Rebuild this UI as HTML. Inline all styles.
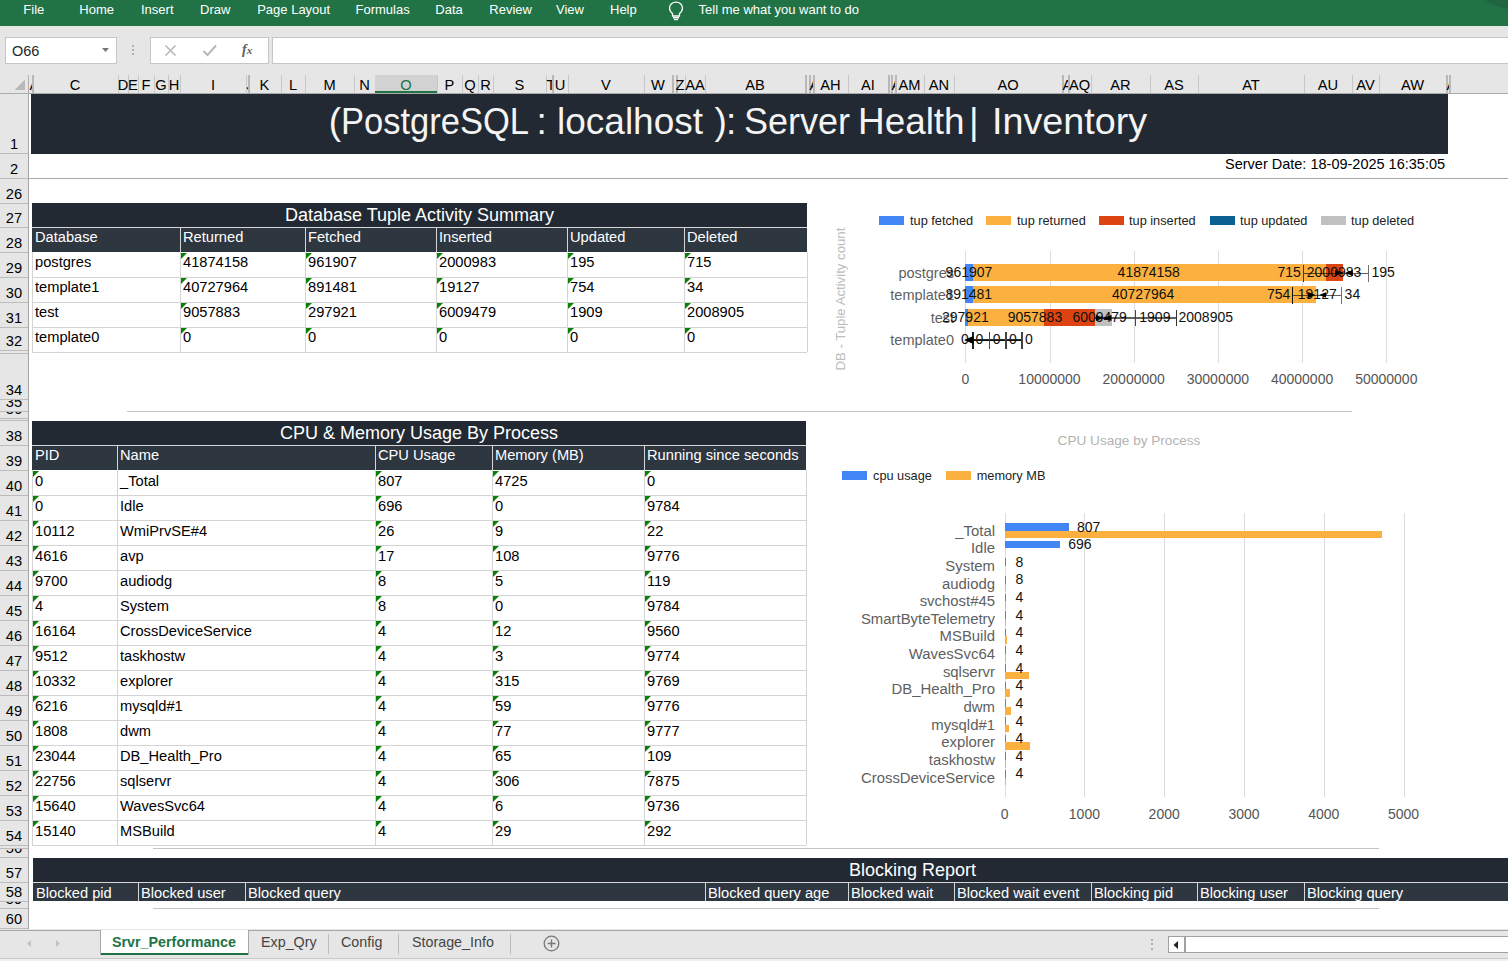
<!DOCTYPE html><html><head><meta charset="utf-8"><style>
*{margin:0;padding:0;box-sizing:border-box}
html,body{width:1508px;height:961px;overflow:hidden;background:#fff}
#r{position:relative;width:1508px;height:961px;overflow:hidden;font-family:"Liberation Sans",sans-serif}
#r div{position:absolute}
.t{white-space:nowrap;line-height:1}
</style></head><body><div id="r"><div style="left:0px;top:0px;width:1508px;height:26px;background:#217346"></div>
<div style="left:1480px;top:-30px;width:80px;height:40px;border-radius:50%;background:#1f6640"></div>
<div class="t" style="left:23.3px;top:3px;color:#fff;font-size:13px">File</div>
<div class="t" style="left:79.3px;top:3px;color:#fff;font-size:13px">Home</div>
<div class="t" style="left:141px;top:3px;color:#fff;font-size:13px">Insert</div>
<div class="t" style="left:200px;top:3px;color:#fff;font-size:13px">Draw</div>
<div class="t" style="left:257.2px;top:3px;color:#fff;font-size:13px">Page Layout</div>
<div class="t" style="left:355.5px;top:3px;color:#fff;font-size:13px">Formulas</div>
<div class="t" style="left:435.3px;top:3px;color:#fff;font-size:13px">Data</div>
<div class="t" style="left:489.3px;top:3px;color:#fff;font-size:13px">Review</div>
<div class="t" style="left:556px;top:3px;color:#fff;font-size:13px">View</div>
<div class="t" style="left:610px;top:3px;color:#fff;font-size:13px">Help</div>
<div class="t" style="left:698.6px;top:3px;color:#fff;font-size:13px">Tell me what you want to do</div>
<svg style="position:absolute;left:667px;top:1px" width="18" height="20" viewBox="0 0 18 20"><path d="M5.5 12.5 C3.5 11 2.5 9 2.5 7 C2.5 3.5 5.5 1.2 9 1.2 C12.5 1.2 15.5 3.5 15.5 7 C15.5 9 14.5 11 12.5 12.5 L12.5 15 L5.5 15 Z" fill="none" stroke="#fff" stroke-width="1.3"/><rect x="6" y="16" width="6" height="1.5" fill="#fff"/><rect x="7" y="18" width="4" height="1.2" fill="#fff"/></svg>
<div style="left:0px;top:26px;width:1508px;height:49px;background:#e6e6e6"></div>
<div style="left:5px;top:37px;width:112px;height:27px;background:#fff;border:1px solid #c6c6c6"></div>
<div class="t" style="left:12px;top:44px;color:#262626;font-size:14.5px">O66</div>
<svg style="position:absolute;left:102px;top:48px" width="8" height="5"><path d="M0 0 L7 0 L3.5 4 Z" fill="#777"/></svg>
<div style="left:132px;top:45px;width:2px;height:2px;background:#b0b0b0"></div>
<div style="left:132px;top:49px;width:2px;height:2px;background:#b0b0b0"></div>
<div style="left:132px;top:53px;width:2px;height:2px;background:#b0b0b0"></div>
<div style="left:150px;top:37px;width:119px;height:27px;background:#fff;border:1px solid #c6c6c6"></div>
<svg style="position:absolute;left:164px;top:44px" width="14" height="13"><path d="M1.5 1.5 L11.5 11.5 M11.5 1.5 L1.5 11.5" stroke="#b8b8b8" stroke-width="1.6"/></svg>
<svg style="position:absolute;left:202px;top:44px" width="16" height="13"><path d="M1.5 7 L5.5 11 L14 1.5" fill="none" stroke="#b8b8b8" stroke-width="2"/></svg>
<div class="t" style="left:242px;top:43px;color:#606060;font-size:14px;font-family:&quot;Liberation Serif&quot;,serif;font-style:italic;font-weight:bold">f<span style="font-size:11px">x</span></div>
<div style="left:272px;top:37px;width:1240px;height:27px;background:#fff;border:1px solid #c6c6c6"></div>
<div style="left:0px;top:75px;width:1508px;height:19px;background:#e6e6e6"></div>
<div style="left:0px;top:93px;width:1508px;height:1px;background:#ababab"></div>
<svg style="position:absolute;left:14px;top:79px" width="12" height="12"><path d="M11 0.5 L11 11 L0.5 11 Z" fill="#b9b9b9"/></svg>
<div style="left:29px;top:75px;width:3px;height:18px;overflow:hidden;"><div class="t" style="left:0;width:8px;top:2.5px;text-align:center;font-size:14.67px;color:#000;left:0.5px;width:20px;text-align:left;">A</div></div>
<div style="left:31.5px;top:75px;width:2px;height:18px;background:#b8b8b8"></div>
<div style="left:32px;top:75px;width:86px;height:18px;overflow:hidden;"><div class="t" style="left:0;width:86px;top:2.5px;text-align:center;font-size:14.67px;color:#000;">C</div></div>
<div style="left:118px;top:75px;width:1px;height:18px;background:#c8c8c8"></div>
<div style="left:118px;top:75px;width:10px;height:18px;overflow:hidden;"><div class="t" style="left:0;width:10px;top:2.5px;text-align:center;font-size:14.67px;color:#000;left:-5px;width:20px;">D</div></div>
<div style="left:128px;top:75px;width:1px;height:18px;background:#c8c8c8"></div>
<div style="left:128px;top:75px;width:10px;height:18px;overflow:hidden;"><div class="t" style="left:0;width:10px;top:2.5px;text-align:center;font-size:14.67px;color:#000;left:-5px;width:20px;">E</div></div>
<div style="left:138px;top:75px;width:1px;height:18px;background:#c8c8c8"></div>
<div style="left:138px;top:75px;width:16px;height:18px;overflow:hidden;"><div class="t" style="left:0;width:16px;top:2.5px;text-align:center;font-size:14.67px;color:#000;">F</div></div>
<div style="left:154px;top:75px;width:1px;height:18px;background:#c8c8c8"></div>
<div style="left:154px;top:75px;width:14px;height:18px;overflow:hidden;"><div class="t" style="left:0;width:14px;top:2.5px;text-align:center;font-size:14.67px;color:#000;">G</div></div>
<div style="left:168px;top:75px;width:1px;height:18px;background:#c8c8c8"></div>
<div style="left:168px;top:75px;width:12px;height:18px;overflow:hidden;"><div class="t" style="left:0;width:12px;top:2.5px;text-align:center;font-size:14.67px;color:#000;">H</div></div>
<div style="left:180px;top:75px;width:1px;height:18px;background:#c8c8c8"></div>
<div style="left:180px;top:75px;width:66px;height:18px;overflow:hidden;"><div class="t" style="left:0;width:66px;top:2.5px;text-align:center;font-size:14.67px;color:#000;">I</div></div>
<div style="left:246px;top:75px;width:1px;height:18px;background:#c8c8c8"></div>
<div style="left:246px;top:75px;width:2px;height:18px;overflow:hidden;"><div class="t" style="left:0;width:8px;top:2.5px;text-align:center;font-size:14.67px;color:#000;left:0.5px;width:20px;text-align:left;">J</div></div>
<div style="left:247.5px;top:75px;width:2px;height:18px;background:#b8b8b8"></div>
<div style="left:248px;top:75px;width:33px;height:18px;overflow:hidden;"><div class="t" style="left:0;width:33px;top:2.5px;text-align:center;font-size:14.67px;color:#000;">K</div></div>
<div style="left:281px;top:75px;width:1px;height:18px;background:#c8c8c8"></div>
<div style="left:281px;top:75px;width:24px;height:18px;overflow:hidden;"><div class="t" style="left:0;width:24px;top:2.5px;text-align:center;font-size:14.67px;color:#000;">L</div></div>
<div style="left:305px;top:75px;width:1px;height:18px;background:#c8c8c8"></div>
<div style="left:305px;top:75px;width:49px;height:18px;overflow:hidden;"><div class="t" style="left:0;width:49px;top:2.5px;text-align:center;font-size:14.67px;color:#000;">M</div></div>
<div style="left:354px;top:75px;width:1px;height:18px;background:#c8c8c8"></div>
<div style="left:354px;top:75px;width:21px;height:18px;overflow:hidden;"><div class="t" style="left:0;width:21px;top:2.5px;text-align:center;font-size:14.67px;color:#000;">N</div></div>
<div style="left:375px;top:75px;width:1px;height:18px;background:#c8c8c8"></div>
<div style="left:375px;top:75px;width:62px;height:18px;overflow:hidden;background:#d2d2d2;"><div class="t" style="left:0;width:62px;top:2.5px;text-align:center;font-size:14.67px;color:#217346;">O</div></div>
<div style="left:437px;top:75px;width:1px;height:18px;background:#c8c8c8"></div>
<div style="left:437px;top:75px;width:25px;height:18px;overflow:hidden;"><div class="t" style="left:0;width:25px;top:2.5px;text-align:center;font-size:14.67px;color:#000;">P</div></div>
<div style="left:462px;top:75px;width:1px;height:18px;background:#c8c8c8"></div>
<div style="left:462px;top:75px;width:16px;height:18px;overflow:hidden;"><div class="t" style="left:0;width:16px;top:2.5px;text-align:center;font-size:14.67px;color:#000;">Q</div></div>
<div style="left:478px;top:75px;width:1px;height:18px;background:#c8c8c8"></div>
<div style="left:478px;top:75px;width:15px;height:18px;overflow:hidden;"><div class="t" style="left:0;width:15px;top:2.5px;text-align:center;font-size:14.67px;color:#000;">R</div></div>
<div style="left:493px;top:75px;width:1px;height:18px;background:#c8c8c8"></div>
<div style="left:493px;top:75px;width:53px;height:18px;overflow:hidden;"><div class="t" style="left:0;width:53px;top:2.5px;text-align:center;font-size:14.67px;color:#000;">S</div></div>
<div style="left:546px;top:75px;width:1px;height:18px;background:#c8c8c8"></div>
<div style="left:546px;top:75px;width:6px;height:18px;overflow:hidden;"><div class="t" style="left:0;width:8px;top:2.5px;text-align:center;font-size:14.67px;color:#000;left:0.5px;width:20px;text-align:left;">T</div></div>
<div style="left:551.5px;top:75px;width:2px;height:18px;background:#b8b8b8"></div>
<div style="left:552px;top:75px;width:16px;height:18px;overflow:hidden;"><div class="t" style="left:0;width:16px;top:2.5px;text-align:center;font-size:14.67px;color:#000;">U</div></div>
<div style="left:568px;top:75px;width:1px;height:18px;background:#c8c8c8"></div>
<div style="left:568px;top:75px;width:76px;height:18px;overflow:hidden;"><div class="t" style="left:0;width:76px;top:2.5px;text-align:center;font-size:14.67px;color:#000;">V</div></div>
<div style="left:644px;top:75px;width:1px;height:18px;background:#c8c8c8"></div>
<div style="left:644px;top:75px;width:28px;height:18px;overflow:hidden;"><div class="t" style="left:0;width:28px;top:2.5px;text-align:center;font-size:14.67px;color:#000;">W</div></div>
<div style="left:671.5px;top:75px;width:2px;height:18px;background:#b8b8b8"></div>
<div style="left:672px;top:75px;width:4px;height:18px;overflow:hidden;"><div class="t" style="left:0;width:8px;top:2.5px;text-align:center;font-size:14.67px;color:#000;left:0.5px;width:20px;text-align:left;"></div></div>
<div style="left:675.5px;top:75px;width:2px;height:18px;background:#b8b8b8"></div>
<div style="left:676px;top:75px;width:9px;height:18px;overflow:hidden;"><div class="t" style="left:0;width:9px;top:2.5px;text-align:center;font-size:14.67px;color:#000;left:-6px;width:20px;">Z</div></div>
<div style="left:685px;top:75px;width:1px;height:18px;background:#c8c8c8"></div>
<div style="left:685px;top:75px;width:20px;height:18px;overflow:hidden;"><div class="t" style="left:0;width:20px;top:2.5px;text-align:center;font-size:14.67px;color:#000;">AA</div></div>
<div style="left:705px;top:75px;width:1px;height:18px;background:#c8c8c8"></div>
<div style="left:705px;top:75px;width:100px;height:18px;overflow:hidden;"><div class="t" style="left:0;width:100px;top:2.5px;text-align:center;font-size:14.67px;color:#000;">AB</div></div>
<div style="left:804.5px;top:75px;width:2px;height:18px;background:#b8b8b8"></div>
<div style="left:805px;top:75px;width:4px;height:18px;overflow:hidden;"><div class="t" style="left:0;width:8px;top:2.5px;text-align:center;font-size:14.67px;color:#000;left:0.5px;width:20px;text-align:left;"></div></div>
<div style="left:808.5px;top:75px;width:2px;height:18px;background:#b8b8b8"></div>
<div style="left:809px;top:75px;width:4px;height:18px;overflow:hidden;"><div class="t" style="left:0;width:8px;top:2.5px;text-align:center;font-size:14.67px;color:#000;left:0.5px;width:20px;text-align:left;">AG</div></div>
<div style="left:812.5px;top:75px;width:2px;height:18px;background:#b8b8b8"></div>
<div style="left:813px;top:75px;width:35px;height:18px;overflow:hidden;"><div class="t" style="left:0;width:35px;top:2.5px;text-align:center;font-size:14.67px;color:#000;">AH</div></div>
<div style="left:848px;top:75px;width:1px;height:18px;background:#c8c8c8"></div>
<div style="left:848px;top:75px;width:40px;height:18px;overflow:hidden;"><div class="t" style="left:0;width:40px;top:2.5px;text-align:center;font-size:14.67px;color:#000;">AI</div></div>
<div style="left:887.5px;top:75px;width:2px;height:18px;background:#b8b8b8"></div>
<div style="left:888px;top:75px;width:3px;height:18px;overflow:hidden;"><div class="t" style="left:0;width:8px;top:2.5px;text-align:center;font-size:14.67px;color:#000;left:0.5px;width:20px;text-align:left;"></div></div>
<div style="left:890.5px;top:75px;width:2px;height:18px;background:#b8b8b8"></div>
<div style="left:891px;top:75px;width:4px;height:18px;overflow:hidden;"><div class="t" style="left:0;width:8px;top:2.5px;text-align:center;font-size:14.67px;color:#000;left:0.5px;width:20px;text-align:left;">AL</div></div>
<div style="left:894.5px;top:75px;width:2px;height:18px;background:#b8b8b8"></div>
<div style="left:895px;top:75px;width:29px;height:18px;overflow:hidden;"><div class="t" style="left:0;width:29px;top:2.5px;text-align:center;font-size:14.67px;color:#000;">AM</div></div>
<div style="left:924px;top:75px;width:1px;height:18px;background:#c8c8c8"></div>
<div style="left:924px;top:75px;width:30px;height:18px;overflow:hidden;"><div class="t" style="left:0;width:30px;top:2.5px;text-align:center;font-size:14.67px;color:#000;">AN</div></div>
<div style="left:954px;top:75px;width:1px;height:18px;background:#c8c8c8"></div>
<div style="left:954px;top:75px;width:108px;height:18px;overflow:hidden;"><div class="t" style="left:0;width:108px;top:2.5px;text-align:center;font-size:14.67px;color:#000;">AO</div></div>
<div style="left:1061.5px;top:75px;width:2px;height:18px;background:#b8b8b8"></div>
<div style="left:1062px;top:75px;width:6px;height:18px;overflow:hidden;"><div class="t" style="left:0;width:8px;top:2.5px;text-align:center;font-size:14.67px;color:#000;left:0.5px;width:20px;text-align:left;">AP</div></div>
<div style="left:1067.5px;top:75px;width:2px;height:18px;background:#b8b8b8"></div>
<div style="left:1068px;top:75px;width:23px;height:18px;overflow:hidden;"><div class="t" style="left:0;width:23px;top:2.5px;text-align:center;font-size:14.67px;color:#000;">AQ</div></div>
<div style="left:1091px;top:75px;width:1px;height:18px;background:#c8c8c8"></div>
<div style="left:1091px;top:75px;width:59px;height:18px;overflow:hidden;"><div class="t" style="left:0;width:59px;top:2.5px;text-align:center;font-size:14.67px;color:#000;">AR</div></div>
<div style="left:1150px;top:75px;width:1px;height:18px;background:#c8c8c8"></div>
<div style="left:1150px;top:75px;width:48px;height:18px;overflow:hidden;"><div class="t" style="left:0;width:48px;top:2.5px;text-align:center;font-size:14.67px;color:#000;">AS</div></div>
<div style="left:1198px;top:75px;width:1px;height:18px;background:#c8c8c8"></div>
<div style="left:1198px;top:75px;width:106px;height:18px;overflow:hidden;"><div class="t" style="left:0;width:106px;top:2.5px;text-align:center;font-size:14.67px;color:#000;">AT</div></div>
<div style="left:1304px;top:75px;width:1px;height:18px;background:#c8c8c8"></div>
<div style="left:1304px;top:75px;width:48px;height:18px;overflow:hidden;"><div class="t" style="left:0;width:48px;top:2.5px;text-align:center;font-size:14.67px;color:#000;">AU</div></div>
<div style="left:1352px;top:75px;width:1px;height:18px;background:#c8c8c8"></div>
<div style="left:1352px;top:75px;width:27px;height:18px;overflow:hidden;"><div class="t" style="left:0;width:27px;top:2.5px;text-align:center;font-size:14.67px;color:#000;">AV</div></div>
<div style="left:1379px;top:75px;width:1px;height:18px;background:#c8c8c8"></div>
<div style="left:1379px;top:75px;width:67px;height:18px;overflow:hidden;"><div class="t" style="left:0;width:67px;top:2.5px;text-align:center;font-size:14.67px;color:#000;">AW</div></div>
<div style="left:1445.5px;top:75px;width:2px;height:18px;background:#b8b8b8"></div>
<div style="left:1446px;top:75px;width:3px;height:18px;overflow:hidden;"><div class="t" style="left:0;width:8px;top:2.5px;text-align:center;font-size:14.67px;color:#000;left:0.5px;width:20px;text-align:left;">AX</div></div>
<div style="left:1448.5px;top:75px;width:2px;height:18px;background:#b8b8b8"></div>
<div style="left:375px;top:91px;width:62px;height:2px;background:#217346"></div>
<div style="left:28px;top:75px;width:1px;height:18px;background:#b0b0b0"></div>
<div style="left:0px;top:94px;width:28px;height:836px;background:#e6e6e6"></div>
<div style="left:28px;top:94px;width:1px;height:836px;background:#a6a6a6"></div>
<div style="left:0;top:94px;width:28px;height:59px;overflow:hidden"><div class="t" style="left:0;width:28px;bottom:1.5px;text-align:center;font-size:14.67px;color:#000">1</div></div>
<div style="left:0px;top:153px;width:28px;height:1px;background:#bcbcbc"></div>
<div style="left:0;top:154px;width:28px;height:24px;overflow:hidden"><div class="t" style="left:0;width:28px;bottom:1.5px;text-align:center;font-size:14.67px;color:#000">2</div></div>
<div style="left:0px;top:178px;width:28px;height:1px;background:#bcbcbc"></div>
<div style="left:0;top:179px;width:28px;height:24px;overflow:hidden"><div class="t" style="left:0;width:28px;bottom:1.5px;text-align:center;font-size:14.67px;color:#000">26</div></div>
<div style="left:0px;top:203px;width:28px;height:1px;background:#bcbcbc"></div>
<div style="left:0;top:204px;width:28px;height:23px;overflow:hidden"><div class="t" style="left:0;width:28px;bottom:1.5px;text-align:center;font-size:14.67px;color:#000">27</div></div>
<div style="left:0px;top:227px;width:28px;height:1px;background:#bcbcbc"></div>
<div style="left:0;top:228px;width:28px;height:24px;overflow:hidden"><div class="t" style="left:0;width:28px;bottom:1.5px;text-align:center;font-size:14.67px;color:#000">28</div></div>
<div style="left:0px;top:252px;width:28px;height:1px;background:#bcbcbc"></div>
<div style="left:0;top:253px;width:28px;height:24px;overflow:hidden"><div class="t" style="left:0;width:28px;bottom:1.5px;text-align:center;font-size:14.67px;color:#000">29</div></div>
<div style="left:0px;top:277px;width:28px;height:1px;background:#bcbcbc"></div>
<div style="left:0;top:278px;width:28px;height:24px;overflow:hidden"><div class="t" style="left:0;width:28px;bottom:1.5px;text-align:center;font-size:14.67px;color:#000">30</div></div>
<div style="left:0px;top:302px;width:28px;height:1px;background:#bcbcbc"></div>
<div style="left:0;top:303px;width:28px;height:24px;overflow:hidden"><div class="t" style="left:0;width:28px;bottom:1.5px;text-align:center;font-size:14.67px;color:#000">31</div></div>
<div style="left:0px;top:327px;width:28px;height:1px;background:#bcbcbc"></div>
<div style="left:0;top:328px;width:28px;height:22px;overflow:hidden"><div class="t" style="left:0;width:28px;bottom:1.5px;text-align:center;font-size:14.67px;color:#000">32</div></div>
<div style="left:0px;top:350px;width:28px;height:1px;background:#bcbcbc"></div>
<div style="left:0;top:351px;width:28px;height:2px;overflow:hidden"><div class="t" style="left:0;width:28px;bottom:1.5px;text-align:center;font-size:14.67px;color:#000">33</div></div>
<div style="left:0px;top:353px;width:28px;height:1px;background:#bcbcbc"></div>
<div style="left:0;top:354px;width:28px;height:45px;overflow:hidden"><div class="t" style="left:0;width:28px;bottom:1.5px;text-align:center;font-size:14.67px;color:#000">34</div></div>
<div style="left:0px;top:399px;width:28px;height:1px;background:#bcbcbc"></div>
<div style="left:0;top:400px;width:28px;height:11px;overflow:hidden"><div class="t" style="left:0;width:28px;bottom:1.5px;text-align:center;font-size:14.67px;color:#000">35</div></div>
<div style="left:0px;top:411px;width:28px;height:1px;background:#bcbcbc"></div>
<div style="left:0;top:412px;width:28px;height:6px;overflow:hidden"><div class="t" style="left:0;width:28px;bottom:1.5px;text-align:center;font-size:14.67px;color:#000">36</div></div>
<div style="left:0px;top:418px;width:28px;height:1px;background:#bcbcbc"></div>
<div style="left:0;top:419px;width:28px;height:1px;overflow:hidden"><div class="t" style="left:0;width:28px;bottom:1.5px;text-align:center;font-size:14.67px;color:#000">37</div></div>
<div style="left:0px;top:420px;width:28px;height:1px;background:#bcbcbc"></div>
<div style="left:0;top:421px;width:28px;height:24px;overflow:hidden"><div class="t" style="left:0;width:28px;bottom:1.5px;text-align:center;font-size:14.67px;color:#000">38</div></div>
<div style="left:0px;top:445px;width:28px;height:1px;background:#bcbcbc"></div>
<div style="left:0;top:446px;width:28px;height:24px;overflow:hidden"><div class="t" style="left:0;width:28px;bottom:1.5px;text-align:center;font-size:14.67px;color:#000">39</div></div>
<div style="left:0px;top:470px;width:28px;height:1px;background:#bcbcbc"></div>
<div style="left:0;top:471px;width:28px;height:24px;overflow:hidden"><div class="t" style="left:0;width:28px;bottom:1.5px;text-align:center;font-size:14.67px;color:#000">40</div></div>
<div style="left:0px;top:495px;width:28px;height:1px;background:#bcbcbc"></div>
<div style="left:0;top:496px;width:28px;height:24px;overflow:hidden"><div class="t" style="left:0;width:28px;bottom:1.5px;text-align:center;font-size:14.67px;color:#000">41</div></div>
<div style="left:0px;top:520px;width:28px;height:1px;background:#bcbcbc"></div>
<div style="left:0;top:521px;width:28px;height:24px;overflow:hidden"><div class="t" style="left:0;width:28px;bottom:1.5px;text-align:center;font-size:14.67px;color:#000">42</div></div>
<div style="left:0px;top:545px;width:28px;height:1px;background:#bcbcbc"></div>
<div style="left:0;top:546px;width:28px;height:24px;overflow:hidden"><div class="t" style="left:0;width:28px;bottom:1.5px;text-align:center;font-size:14.67px;color:#000">43</div></div>
<div style="left:0px;top:570px;width:28px;height:1px;background:#bcbcbc"></div>
<div style="left:0;top:571px;width:28px;height:24px;overflow:hidden"><div class="t" style="left:0;width:28px;bottom:1.5px;text-align:center;font-size:14.67px;color:#000">44</div></div>
<div style="left:0px;top:595px;width:28px;height:1px;background:#bcbcbc"></div>
<div style="left:0;top:596px;width:28px;height:24px;overflow:hidden"><div class="t" style="left:0;width:28px;bottom:1.5px;text-align:center;font-size:14.67px;color:#000">45</div></div>
<div style="left:0px;top:620px;width:28px;height:1px;background:#bcbcbc"></div>
<div style="left:0;top:621px;width:28px;height:24px;overflow:hidden"><div class="t" style="left:0;width:28px;bottom:1.5px;text-align:center;font-size:14.67px;color:#000">46</div></div>
<div style="left:0px;top:645px;width:28px;height:1px;background:#bcbcbc"></div>
<div style="left:0;top:646px;width:28px;height:24px;overflow:hidden"><div class="t" style="left:0;width:28px;bottom:1.5px;text-align:center;font-size:14.67px;color:#000">47</div></div>
<div style="left:0px;top:670px;width:28px;height:1px;background:#bcbcbc"></div>
<div style="left:0;top:671px;width:28px;height:24px;overflow:hidden"><div class="t" style="left:0;width:28px;bottom:1.5px;text-align:center;font-size:14.67px;color:#000">48</div></div>
<div style="left:0px;top:695px;width:28px;height:1px;background:#bcbcbc"></div>
<div style="left:0;top:696px;width:28px;height:24px;overflow:hidden"><div class="t" style="left:0;width:28px;bottom:1.5px;text-align:center;font-size:14.67px;color:#000">49</div></div>
<div style="left:0px;top:720px;width:28px;height:1px;background:#bcbcbc"></div>
<div style="left:0;top:721px;width:28px;height:24px;overflow:hidden"><div class="t" style="left:0;width:28px;bottom:1.5px;text-align:center;font-size:14.67px;color:#000">50</div></div>
<div style="left:0px;top:745px;width:28px;height:1px;background:#bcbcbc"></div>
<div style="left:0;top:746px;width:28px;height:24px;overflow:hidden"><div class="t" style="left:0;width:28px;bottom:1.5px;text-align:center;font-size:14.67px;color:#000">51</div></div>
<div style="left:0px;top:770px;width:28px;height:1px;background:#bcbcbc"></div>
<div style="left:0;top:771px;width:28px;height:24px;overflow:hidden"><div class="t" style="left:0;width:28px;bottom:1.5px;text-align:center;font-size:14.67px;color:#000">52</div></div>
<div style="left:0px;top:795px;width:28px;height:1px;background:#bcbcbc"></div>
<div style="left:0;top:796px;width:28px;height:24px;overflow:hidden"><div class="t" style="left:0;width:28px;bottom:1.5px;text-align:center;font-size:14.67px;color:#000">53</div></div>
<div style="left:0px;top:820px;width:28px;height:1px;background:#bcbcbc"></div>
<div style="left:0;top:821px;width:28px;height:24px;overflow:hidden"><div class="t" style="left:0;width:28px;bottom:1.5px;text-align:center;font-size:14.67px;color:#000">54</div></div>
<div style="left:0px;top:845px;width:28px;height:1px;background:#bcbcbc"></div>
<div style="left:0;top:846px;width:28px;height:2px;overflow:hidden"><div class="t" style="left:0;width:28px;bottom:1.5px;text-align:center;font-size:14.67px;color:#000">55</div></div>
<div style="left:0px;top:848px;width:28px;height:1px;background:#bcbcbc"></div>
<div style="left:0;top:849px;width:28px;height:8px;overflow:hidden"><div class="t" style="left:0;width:28px;bottom:1.5px;text-align:center;font-size:14.67px;color:#000">56</div></div>
<div style="left:0px;top:857px;width:28px;height:1px;background:#bcbcbc"></div>
<div style="left:0;top:858px;width:28px;height:24px;overflow:hidden"><div class="t" style="left:0;width:28px;bottom:1.5px;text-align:center;font-size:14.67px;color:#000">57</div></div>
<div style="left:0px;top:882px;width:28px;height:1px;background:#bcbcbc"></div>
<div style="left:0;top:883px;width:28px;height:18px;overflow:hidden"><div class="t" style="left:0;width:28px;bottom:1.5px;text-align:center;font-size:14.67px;color:#000">58</div></div>
<div style="left:0px;top:901px;width:28px;height:1px;background:#bcbcbc"></div>
<div style="left:0;top:902px;width:28px;height:6px;overflow:hidden"><div class="t" style="left:0;width:28px;bottom:1.5px;text-align:center;font-size:14.67px;color:#000">59</div></div>
<div style="left:0px;top:908px;width:28px;height:1px;background:#bcbcbc"></div>
<div style="left:0;top:909px;width:28px;height:19px;overflow:hidden"><div class="t" style="left:0;width:28px;bottom:1.5px;text-align:center;font-size:14.67px;color:#000">60</div></div>
<div style="left:0px;top:928px;width:28px;height:1px;background:#bcbcbc"></div>
<div style="left:29px;top:178px;width:1479px;height:1px;background:#a9a9a9"></div>
<div style="left:31px;top:94px;width:1417px;height:60px;background:#222932"></div>
<div class="t" style="left:328.8px;top:102.7px;color:#f4f4f4;font-size:37px;transform:scaleX(1);transform-origin:0 0">(</div>
<div class="t" style="left:340.84999999999997px;top:102.7px;color:#f4f4f4;font-size:37px;transform:scaleX(0.933);transform-origin:0 0">PostgreSQL</div>
<div class="t" style="left:536.6px;top:102.7px;color:#f4f4f4;font-size:37px;transform:scaleX(1);transform-origin:0 0">:</div>
<div class="t" style="left:557.0px;top:102.7px;color:#f4f4f4;font-size:37px;transform:scaleX(1.0);transform-origin:0 0">localhost</div>
<div class="t" style="left:714.5px;top:102.7px;color:#f4f4f4;font-size:37px;transform:scaleX(1);transform-origin:0 0">)</div>
<div class="t" style="left:726.1px;top:102.7px;color:#f4f4f4;font-size:37px;transform:scaleX(1);transform-origin:0 0">:</div>
<div class="t" style="left:743.9000000000001px;top:102.7px;color:#f4f4f4;font-size:37px;transform:scaleX(0.973);transform-origin:0 0">Server</div>
<div class="t" style="left:858.3000000000001px;top:102.7px;color:#f4f4f4;font-size:37px;transform:scaleX(0.997);transform-origin:0 0">Health</div>
<div class="t" style="left:969.0px;top:102.7px;color:#f4f4f4;font-size:37px;transform:scaleX(1);transform-origin:0 0">|</div>
<div class="t" style="left:991.8000000000001px;top:102.7px;color:#f4f4f4;font-size:37px;transform:scaleX(1.02);transform-origin:0 0">Inventory</div>
<div class="t" style="left:1225px;top:157px;color:#000;font-size:14.5px">Server Date: 18-09-2025 16:35:05</div>
<div style="left:32px;top:203px;width:775px;height:24px;background:#222932"></div>
<div class="t" style="left:32px;width:775px;top:206px;text-align:center;color:#fff;font-size:18px">Database Tuple Activity Summary</div>
<div style="left:32px;top:228px;width:775px;height:24px;background:#2e3640"></div>
<div style="left:32px;top:227px;width:775px;height:1px;background:#d6d6d6"></div>
<div class="t" style="left:35px;top:230px;color:#fff;font-size:14.67px">Database</div>
<div style="left:180px;top:228px;width:1px;height:24px;background:#d6d6d6"></div>
<div class="t" style="left:183px;top:230px;color:#fff;font-size:14.67px">Returned</div>
<div style="left:305px;top:228px;width:1px;height:24px;background:#d6d6d6"></div>
<div class="t" style="left:308px;top:230px;color:#fff;font-size:14.67px">Fetched</div>
<div style="left:436px;top:228px;width:1px;height:24px;background:#d6d6d6"></div>
<div class="t" style="left:439px;top:230px;color:#fff;font-size:14.67px">Inserted</div>
<div style="left:567px;top:228px;width:1px;height:24px;background:#d6d6d6"></div>
<div class="t" style="left:570px;top:230px;color:#fff;font-size:14.67px">Updated</div>
<div style="left:684px;top:228px;width:1px;height:24px;background:#d6d6d6"></div>
<div class="t" style="left:687px;top:230px;color:#fff;font-size:14.67px">Deleted</div>
<div class="t" style="left:35px;top:255px;color:#000;font-size:14.67px">postgres</div>
<div class="t" style="left:183px;top:255px;color:#000;font-size:14.67px">41874158</div>
<svg style="position:absolute;left:181px;top:253px" width="7" height="7"><path d="M0 0 L6 0 L0 6 Z" fill="#078207"/></svg>
<div class="t" style="left:308px;top:255px;color:#000;font-size:14.67px">961907</div>
<svg style="position:absolute;left:306px;top:253px" width="7" height="7"><path d="M0 0 L6 0 L0 6 Z" fill="#078207"/></svg>
<div class="t" style="left:439px;top:255px;color:#000;font-size:14.67px">2000983</div>
<svg style="position:absolute;left:437px;top:253px" width="7" height="7"><path d="M0 0 L6 0 L0 6 Z" fill="#078207"/></svg>
<div class="t" style="left:570px;top:255px;color:#000;font-size:14.67px">195</div>
<svg style="position:absolute;left:568px;top:253px" width="7" height="7"><path d="M0 0 L6 0 L0 6 Z" fill="#078207"/></svg>
<div class="t" style="left:687px;top:255px;color:#000;font-size:14.67px">715</div>
<svg style="position:absolute;left:685px;top:253px" width="7" height="7"><path d="M0 0 L6 0 L0 6 Z" fill="#078207"/></svg>
<div style="left:32px;top:277px;width:775px;height:1px;background:#d4d4d4"></div>
<div class="t" style="left:35px;top:280px;color:#000;font-size:14.67px">template1</div>
<div class="t" style="left:183px;top:280px;color:#000;font-size:14.67px">40727964</div>
<svg style="position:absolute;left:181px;top:278px" width="7" height="7"><path d="M0 0 L6 0 L0 6 Z" fill="#078207"/></svg>
<div class="t" style="left:308px;top:280px;color:#000;font-size:14.67px">891481</div>
<svg style="position:absolute;left:306px;top:278px" width="7" height="7"><path d="M0 0 L6 0 L0 6 Z" fill="#078207"/></svg>
<div class="t" style="left:439px;top:280px;color:#000;font-size:14.67px">19127</div>
<svg style="position:absolute;left:437px;top:278px" width="7" height="7"><path d="M0 0 L6 0 L0 6 Z" fill="#078207"/></svg>
<div class="t" style="left:570px;top:280px;color:#000;font-size:14.67px">754</div>
<svg style="position:absolute;left:568px;top:278px" width="7" height="7"><path d="M0 0 L6 0 L0 6 Z" fill="#078207"/></svg>
<div class="t" style="left:687px;top:280px;color:#000;font-size:14.67px">34</div>
<svg style="position:absolute;left:685px;top:278px" width="7" height="7"><path d="M0 0 L6 0 L0 6 Z" fill="#078207"/></svg>
<div style="left:32px;top:302px;width:775px;height:1px;background:#d4d4d4"></div>
<div class="t" style="left:35px;top:305px;color:#000;font-size:14.67px">test</div>
<div class="t" style="left:183px;top:305px;color:#000;font-size:14.67px">9057883</div>
<svg style="position:absolute;left:181px;top:303px" width="7" height="7"><path d="M0 0 L6 0 L0 6 Z" fill="#078207"/></svg>
<div class="t" style="left:308px;top:305px;color:#000;font-size:14.67px">297921</div>
<svg style="position:absolute;left:306px;top:303px" width="7" height="7"><path d="M0 0 L6 0 L0 6 Z" fill="#078207"/></svg>
<div class="t" style="left:439px;top:305px;color:#000;font-size:14.67px">6009479</div>
<svg style="position:absolute;left:437px;top:303px" width="7" height="7"><path d="M0 0 L6 0 L0 6 Z" fill="#078207"/></svg>
<div class="t" style="left:570px;top:305px;color:#000;font-size:14.67px">1909</div>
<svg style="position:absolute;left:568px;top:303px" width="7" height="7"><path d="M0 0 L6 0 L0 6 Z" fill="#078207"/></svg>
<div class="t" style="left:687px;top:305px;color:#000;font-size:14.67px">2008905</div>
<svg style="position:absolute;left:685px;top:303px" width="7" height="7"><path d="M0 0 L6 0 L0 6 Z" fill="#078207"/></svg>
<div style="left:32px;top:327px;width:775px;height:1px;background:#d4d4d4"></div>
<div class="t" style="left:35px;top:330px;color:#000;font-size:14.67px">template0</div>
<div class="t" style="left:183px;top:330px;color:#000;font-size:14.67px">0</div>
<svg style="position:absolute;left:181px;top:328px" width="7" height="7"><path d="M0 0 L6 0 L0 6 Z" fill="#078207"/></svg>
<div class="t" style="left:308px;top:330px;color:#000;font-size:14.67px">0</div>
<svg style="position:absolute;left:306px;top:328px" width="7" height="7"><path d="M0 0 L6 0 L0 6 Z" fill="#078207"/></svg>
<div class="t" style="left:439px;top:330px;color:#000;font-size:14.67px">0</div>
<svg style="position:absolute;left:437px;top:328px" width="7" height="7"><path d="M0 0 L6 0 L0 6 Z" fill="#078207"/></svg>
<div class="t" style="left:570px;top:330px;color:#000;font-size:14.67px">0</div>
<svg style="position:absolute;left:568px;top:328px" width="7" height="7"><path d="M0 0 L6 0 L0 6 Z" fill="#078207"/></svg>
<div class="t" style="left:687px;top:330px;color:#000;font-size:14.67px">0</div>
<svg style="position:absolute;left:685px;top:328px" width="7" height="7"><path d="M0 0 L6 0 L0 6 Z" fill="#078207"/></svg>
<div style="left:32px;top:352px;width:775px;height:1px;background:#d4d4d4"></div>
<div style="left:32px;top:252px;width:1px;height:100px;background:#d4d4d4"></div>
<div style="left:180px;top:252px;width:1px;height:100px;background:#d4d4d4"></div>
<div style="left:305px;top:252px;width:1px;height:100px;background:#d4d4d4"></div>
<div style="left:436px;top:252px;width:1px;height:100px;background:#d4d4d4"></div>
<div style="left:567px;top:252px;width:1px;height:100px;background:#d4d4d4"></div>
<div style="left:684px;top:252px;width:1px;height:100px;background:#d4d4d4"></div>
<div style="left:807px;top:252px;width:1px;height:100px;background:#d4d4d4"></div>
<div style="left:127px;top:411px;width:1225px;height:1px;background:#c4c4c4"></div>
<div style="left:153px;top:848px;width:1226px;height:1px;background:#c4c4c4"></div>
<div style="left:153px;top:908px;width:1226px;height:1px;background:#c4c4c4"></div>
<div style="left:32px;top:421px;width:774px;height:24px;background:#222932"></div>
<div class="t" style="left:32px;width:774px;top:424px;text-align:center;color:#fff;font-size:18px">CPU &amp; Memory Usage By Process</div>
<div style="left:32px;top:446px;width:774px;height:24px;background:#2e3640"></div>
<div style="left:32px;top:445px;width:774px;height:1px;background:#d6d6d6"></div>
<div class="t" style="left:35px;top:448px;color:#fff;font-size:14.67px">PID</div>
<div style="left:117px;top:446px;width:1px;height:24px;background:#d6d6d6"></div>
<div class="t" style="left:120px;top:448px;color:#fff;font-size:14.67px">Name</div>
<div style="left:375px;top:446px;width:1px;height:24px;background:#d6d6d6"></div>
<div class="t" style="left:378px;top:448px;color:#fff;font-size:14.67px">CPU Usage</div>
<div style="left:492px;top:446px;width:1px;height:24px;background:#d6d6d6"></div>
<div class="t" style="left:495px;top:448px;color:#fff;font-size:14.67px">Memory (MB)</div>
<div style="left:644px;top:446px;width:1px;height:24px;background:#d6d6d6"></div>
<div class="t" style="left:647px;top:448px;color:#fff;font-size:14.67px">Running since seconds</div>
<div class="t" style="left:35px;top:474px;color:#000;font-size:14.67px">0</div>
<svg style="position:absolute;left:33px;top:471px" width="7" height="7"><path d="M0 0 L6 0 L0 6 Z" fill="#078207"/></svg>
<div class="t" style="left:120px;top:474px;color:#000;font-size:14.67px">_Total</div>
<div class="t" style="left:378px;top:474px;color:#000;font-size:14.67px">807</div>
<svg style="position:absolute;left:376px;top:471px" width="7" height="7"><path d="M0 0 L6 0 L0 6 Z" fill="#078207"/></svg>
<div class="t" style="left:495px;top:474px;color:#000;font-size:14.67px">4725</div>
<svg style="position:absolute;left:493px;top:471px" width="7" height="7"><path d="M0 0 L6 0 L0 6 Z" fill="#078207"/></svg>
<div class="t" style="left:647px;top:474px;color:#000;font-size:14.67px">0</div>
<svg style="position:absolute;left:645px;top:471px" width="7" height="7"><path d="M0 0 L6 0 L0 6 Z" fill="#078207"/></svg>
<div style="left:32px;top:495px;width:774px;height:1px;background:#d4d4d4"></div>
<div class="t" style="left:35px;top:499px;color:#000;font-size:14.67px">0</div>
<svg style="position:absolute;left:33px;top:496px" width="7" height="7"><path d="M0 0 L6 0 L0 6 Z" fill="#078207"/></svg>
<div class="t" style="left:120px;top:499px;color:#000;font-size:14.67px">Idle</div>
<div class="t" style="left:378px;top:499px;color:#000;font-size:14.67px">696</div>
<svg style="position:absolute;left:376px;top:496px" width="7" height="7"><path d="M0 0 L6 0 L0 6 Z" fill="#078207"/></svg>
<div class="t" style="left:495px;top:499px;color:#000;font-size:14.67px">0</div>
<svg style="position:absolute;left:493px;top:496px" width="7" height="7"><path d="M0 0 L6 0 L0 6 Z" fill="#078207"/></svg>
<div class="t" style="left:647px;top:499px;color:#000;font-size:14.67px">9784</div>
<svg style="position:absolute;left:645px;top:496px" width="7" height="7"><path d="M0 0 L6 0 L0 6 Z" fill="#078207"/></svg>
<div style="left:32px;top:520px;width:774px;height:1px;background:#d4d4d4"></div>
<div class="t" style="left:35px;top:524px;color:#000;font-size:14.67px">10112</div>
<svg style="position:absolute;left:33px;top:521px" width="7" height="7"><path d="M0 0 L6 0 L0 6 Z" fill="#078207"/></svg>
<div class="t" style="left:120px;top:524px;color:#000;font-size:14.67px">WmiPrvSE#4</div>
<div class="t" style="left:378px;top:524px;color:#000;font-size:14.67px">26</div>
<svg style="position:absolute;left:376px;top:521px" width="7" height="7"><path d="M0 0 L6 0 L0 6 Z" fill="#078207"/></svg>
<div class="t" style="left:495px;top:524px;color:#000;font-size:14.67px">9</div>
<svg style="position:absolute;left:493px;top:521px" width="7" height="7"><path d="M0 0 L6 0 L0 6 Z" fill="#078207"/></svg>
<div class="t" style="left:647px;top:524px;color:#000;font-size:14.67px">22</div>
<svg style="position:absolute;left:645px;top:521px" width="7" height="7"><path d="M0 0 L6 0 L0 6 Z" fill="#078207"/></svg>
<div style="left:32px;top:545px;width:774px;height:1px;background:#d4d4d4"></div>
<div class="t" style="left:35px;top:549px;color:#000;font-size:14.67px">4616</div>
<svg style="position:absolute;left:33px;top:546px" width="7" height="7"><path d="M0 0 L6 0 L0 6 Z" fill="#078207"/></svg>
<div class="t" style="left:120px;top:549px;color:#000;font-size:14.67px">avp</div>
<div class="t" style="left:378px;top:549px;color:#000;font-size:14.67px">17</div>
<svg style="position:absolute;left:376px;top:546px" width="7" height="7"><path d="M0 0 L6 0 L0 6 Z" fill="#078207"/></svg>
<div class="t" style="left:495px;top:549px;color:#000;font-size:14.67px">108</div>
<svg style="position:absolute;left:493px;top:546px" width="7" height="7"><path d="M0 0 L6 0 L0 6 Z" fill="#078207"/></svg>
<div class="t" style="left:647px;top:549px;color:#000;font-size:14.67px">9776</div>
<svg style="position:absolute;left:645px;top:546px" width="7" height="7"><path d="M0 0 L6 0 L0 6 Z" fill="#078207"/></svg>
<div style="left:32px;top:570px;width:774px;height:1px;background:#d4d4d4"></div>
<div class="t" style="left:35px;top:574px;color:#000;font-size:14.67px">9700</div>
<svg style="position:absolute;left:33px;top:571px" width="7" height="7"><path d="M0 0 L6 0 L0 6 Z" fill="#078207"/></svg>
<div class="t" style="left:120px;top:574px;color:#000;font-size:14.67px">audiodg</div>
<div class="t" style="left:378px;top:574px;color:#000;font-size:14.67px">8</div>
<svg style="position:absolute;left:376px;top:571px" width="7" height="7"><path d="M0 0 L6 0 L0 6 Z" fill="#078207"/></svg>
<div class="t" style="left:495px;top:574px;color:#000;font-size:14.67px">5</div>
<svg style="position:absolute;left:493px;top:571px" width="7" height="7"><path d="M0 0 L6 0 L0 6 Z" fill="#078207"/></svg>
<div class="t" style="left:647px;top:574px;color:#000;font-size:14.67px">119</div>
<svg style="position:absolute;left:645px;top:571px" width="7" height="7"><path d="M0 0 L6 0 L0 6 Z" fill="#078207"/></svg>
<div style="left:32px;top:595px;width:774px;height:1px;background:#d4d4d4"></div>
<div class="t" style="left:35px;top:599px;color:#000;font-size:14.67px">4</div>
<svg style="position:absolute;left:33px;top:596px" width="7" height="7"><path d="M0 0 L6 0 L0 6 Z" fill="#078207"/></svg>
<div class="t" style="left:120px;top:599px;color:#000;font-size:14.67px">System</div>
<div class="t" style="left:378px;top:599px;color:#000;font-size:14.67px">8</div>
<svg style="position:absolute;left:376px;top:596px" width="7" height="7"><path d="M0 0 L6 0 L0 6 Z" fill="#078207"/></svg>
<div class="t" style="left:495px;top:599px;color:#000;font-size:14.67px">0</div>
<svg style="position:absolute;left:493px;top:596px" width="7" height="7"><path d="M0 0 L6 0 L0 6 Z" fill="#078207"/></svg>
<div class="t" style="left:647px;top:599px;color:#000;font-size:14.67px">9784</div>
<svg style="position:absolute;left:645px;top:596px" width="7" height="7"><path d="M0 0 L6 0 L0 6 Z" fill="#078207"/></svg>
<div style="left:32px;top:620px;width:774px;height:1px;background:#d4d4d4"></div>
<div class="t" style="left:35px;top:624px;color:#000;font-size:14.67px">16164</div>
<svg style="position:absolute;left:33px;top:621px" width="7" height="7"><path d="M0 0 L6 0 L0 6 Z" fill="#078207"/></svg>
<div class="t" style="left:120px;top:624px;color:#000;font-size:14.67px">CrossDeviceService</div>
<div class="t" style="left:378px;top:624px;color:#000;font-size:14.67px">4</div>
<svg style="position:absolute;left:376px;top:621px" width="7" height="7"><path d="M0 0 L6 0 L0 6 Z" fill="#078207"/></svg>
<div class="t" style="left:495px;top:624px;color:#000;font-size:14.67px">12</div>
<svg style="position:absolute;left:493px;top:621px" width="7" height="7"><path d="M0 0 L6 0 L0 6 Z" fill="#078207"/></svg>
<div class="t" style="left:647px;top:624px;color:#000;font-size:14.67px">9560</div>
<svg style="position:absolute;left:645px;top:621px" width="7" height="7"><path d="M0 0 L6 0 L0 6 Z" fill="#078207"/></svg>
<div style="left:32px;top:645px;width:774px;height:1px;background:#d4d4d4"></div>
<div class="t" style="left:35px;top:649px;color:#000;font-size:14.67px">9512</div>
<svg style="position:absolute;left:33px;top:646px" width="7" height="7"><path d="M0 0 L6 0 L0 6 Z" fill="#078207"/></svg>
<div class="t" style="left:120px;top:649px;color:#000;font-size:14.67px">taskhostw</div>
<div class="t" style="left:378px;top:649px;color:#000;font-size:14.67px">4</div>
<svg style="position:absolute;left:376px;top:646px" width="7" height="7"><path d="M0 0 L6 0 L0 6 Z" fill="#078207"/></svg>
<div class="t" style="left:495px;top:649px;color:#000;font-size:14.67px">3</div>
<svg style="position:absolute;left:493px;top:646px" width="7" height="7"><path d="M0 0 L6 0 L0 6 Z" fill="#078207"/></svg>
<div class="t" style="left:647px;top:649px;color:#000;font-size:14.67px">9774</div>
<svg style="position:absolute;left:645px;top:646px" width="7" height="7"><path d="M0 0 L6 0 L0 6 Z" fill="#078207"/></svg>
<div style="left:32px;top:670px;width:774px;height:1px;background:#d4d4d4"></div>
<div class="t" style="left:35px;top:674px;color:#000;font-size:14.67px">10332</div>
<svg style="position:absolute;left:33px;top:671px" width="7" height="7"><path d="M0 0 L6 0 L0 6 Z" fill="#078207"/></svg>
<div class="t" style="left:120px;top:674px;color:#000;font-size:14.67px">explorer</div>
<div class="t" style="left:378px;top:674px;color:#000;font-size:14.67px">4</div>
<svg style="position:absolute;left:376px;top:671px" width="7" height="7"><path d="M0 0 L6 0 L0 6 Z" fill="#078207"/></svg>
<div class="t" style="left:495px;top:674px;color:#000;font-size:14.67px">315</div>
<svg style="position:absolute;left:493px;top:671px" width="7" height="7"><path d="M0 0 L6 0 L0 6 Z" fill="#078207"/></svg>
<div class="t" style="left:647px;top:674px;color:#000;font-size:14.67px">9769</div>
<svg style="position:absolute;left:645px;top:671px" width="7" height="7"><path d="M0 0 L6 0 L0 6 Z" fill="#078207"/></svg>
<div style="left:32px;top:695px;width:774px;height:1px;background:#d4d4d4"></div>
<div class="t" style="left:35px;top:699px;color:#000;font-size:14.67px">6216</div>
<svg style="position:absolute;left:33px;top:696px" width="7" height="7"><path d="M0 0 L6 0 L0 6 Z" fill="#078207"/></svg>
<div class="t" style="left:120px;top:699px;color:#000;font-size:14.67px">mysqld#1</div>
<div class="t" style="left:378px;top:699px;color:#000;font-size:14.67px">4</div>
<svg style="position:absolute;left:376px;top:696px" width="7" height="7"><path d="M0 0 L6 0 L0 6 Z" fill="#078207"/></svg>
<div class="t" style="left:495px;top:699px;color:#000;font-size:14.67px">59</div>
<svg style="position:absolute;left:493px;top:696px" width="7" height="7"><path d="M0 0 L6 0 L0 6 Z" fill="#078207"/></svg>
<div class="t" style="left:647px;top:699px;color:#000;font-size:14.67px">9776</div>
<svg style="position:absolute;left:645px;top:696px" width="7" height="7"><path d="M0 0 L6 0 L0 6 Z" fill="#078207"/></svg>
<div style="left:32px;top:720px;width:774px;height:1px;background:#d4d4d4"></div>
<div class="t" style="left:35px;top:724px;color:#000;font-size:14.67px">1808</div>
<svg style="position:absolute;left:33px;top:721px" width="7" height="7"><path d="M0 0 L6 0 L0 6 Z" fill="#078207"/></svg>
<div class="t" style="left:120px;top:724px;color:#000;font-size:14.67px">dwm</div>
<div class="t" style="left:378px;top:724px;color:#000;font-size:14.67px">4</div>
<svg style="position:absolute;left:376px;top:721px" width="7" height="7"><path d="M0 0 L6 0 L0 6 Z" fill="#078207"/></svg>
<div class="t" style="left:495px;top:724px;color:#000;font-size:14.67px">77</div>
<svg style="position:absolute;left:493px;top:721px" width="7" height="7"><path d="M0 0 L6 0 L0 6 Z" fill="#078207"/></svg>
<div class="t" style="left:647px;top:724px;color:#000;font-size:14.67px">9777</div>
<svg style="position:absolute;left:645px;top:721px" width="7" height="7"><path d="M0 0 L6 0 L0 6 Z" fill="#078207"/></svg>
<div style="left:32px;top:745px;width:774px;height:1px;background:#d4d4d4"></div>
<div class="t" style="left:35px;top:749px;color:#000;font-size:14.67px">23044</div>
<svg style="position:absolute;left:33px;top:746px" width="7" height="7"><path d="M0 0 L6 0 L0 6 Z" fill="#078207"/></svg>
<div class="t" style="left:120px;top:749px;color:#000;font-size:14.67px">DB_Health_Pro</div>
<div class="t" style="left:378px;top:749px;color:#000;font-size:14.67px">4</div>
<svg style="position:absolute;left:376px;top:746px" width="7" height="7"><path d="M0 0 L6 0 L0 6 Z" fill="#078207"/></svg>
<div class="t" style="left:495px;top:749px;color:#000;font-size:14.67px">65</div>
<svg style="position:absolute;left:493px;top:746px" width="7" height="7"><path d="M0 0 L6 0 L0 6 Z" fill="#078207"/></svg>
<div class="t" style="left:647px;top:749px;color:#000;font-size:14.67px">109</div>
<svg style="position:absolute;left:645px;top:746px" width="7" height="7"><path d="M0 0 L6 0 L0 6 Z" fill="#078207"/></svg>
<div style="left:32px;top:770px;width:774px;height:1px;background:#d4d4d4"></div>
<div class="t" style="left:35px;top:774px;color:#000;font-size:14.67px">22756</div>
<svg style="position:absolute;left:33px;top:771px" width="7" height="7"><path d="M0 0 L6 0 L0 6 Z" fill="#078207"/></svg>
<div class="t" style="left:120px;top:774px;color:#000;font-size:14.67px">sqlservr</div>
<div class="t" style="left:378px;top:774px;color:#000;font-size:14.67px">4</div>
<svg style="position:absolute;left:376px;top:771px" width="7" height="7"><path d="M0 0 L6 0 L0 6 Z" fill="#078207"/></svg>
<div class="t" style="left:495px;top:774px;color:#000;font-size:14.67px">306</div>
<svg style="position:absolute;left:493px;top:771px" width="7" height="7"><path d="M0 0 L6 0 L0 6 Z" fill="#078207"/></svg>
<div class="t" style="left:647px;top:774px;color:#000;font-size:14.67px">7875</div>
<svg style="position:absolute;left:645px;top:771px" width="7" height="7"><path d="M0 0 L6 0 L0 6 Z" fill="#078207"/></svg>
<div style="left:32px;top:795px;width:774px;height:1px;background:#d4d4d4"></div>
<div class="t" style="left:35px;top:799px;color:#000;font-size:14.67px">15640</div>
<svg style="position:absolute;left:33px;top:796px" width="7" height="7"><path d="M0 0 L6 0 L0 6 Z" fill="#078207"/></svg>
<div class="t" style="left:120px;top:799px;color:#000;font-size:14.67px">WavesSvc64</div>
<div class="t" style="left:378px;top:799px;color:#000;font-size:14.67px">4</div>
<svg style="position:absolute;left:376px;top:796px" width="7" height="7"><path d="M0 0 L6 0 L0 6 Z" fill="#078207"/></svg>
<div class="t" style="left:495px;top:799px;color:#000;font-size:14.67px">6</div>
<svg style="position:absolute;left:493px;top:796px" width="7" height="7"><path d="M0 0 L6 0 L0 6 Z" fill="#078207"/></svg>
<div class="t" style="left:647px;top:799px;color:#000;font-size:14.67px">9736</div>
<svg style="position:absolute;left:645px;top:796px" width="7" height="7"><path d="M0 0 L6 0 L0 6 Z" fill="#078207"/></svg>
<div style="left:32px;top:820px;width:774px;height:1px;background:#d4d4d4"></div>
<div class="t" style="left:35px;top:824px;color:#000;font-size:14.67px">15140</div>
<svg style="position:absolute;left:33px;top:821px" width="7" height="7"><path d="M0 0 L6 0 L0 6 Z" fill="#078207"/></svg>
<div class="t" style="left:120px;top:824px;color:#000;font-size:14.67px">MSBuild</div>
<div class="t" style="left:378px;top:824px;color:#000;font-size:14.67px">4</div>
<svg style="position:absolute;left:376px;top:821px" width="7" height="7"><path d="M0 0 L6 0 L0 6 Z" fill="#078207"/></svg>
<div class="t" style="left:495px;top:824px;color:#000;font-size:14.67px">29</div>
<svg style="position:absolute;left:493px;top:821px" width="7" height="7"><path d="M0 0 L6 0 L0 6 Z" fill="#078207"/></svg>
<div class="t" style="left:647px;top:824px;color:#000;font-size:14.67px">292</div>
<svg style="position:absolute;left:645px;top:821px" width="7" height="7"><path d="M0 0 L6 0 L0 6 Z" fill="#078207"/></svg>
<div style="left:32px;top:845px;width:774px;height:1px;background:#d4d4d4"></div>
<div style="left:32px;top:470px;width:1px;height:375px;background:#d4d4d4"></div>
<div style="left:117px;top:470px;width:1px;height:375px;background:#d4d4d4"></div>
<div style="left:375px;top:470px;width:1px;height:375px;background:#d4d4d4"></div>
<div style="left:492px;top:470px;width:1px;height:375px;background:#d4d4d4"></div>
<div style="left:644px;top:470px;width:1px;height:375px;background:#d4d4d4"></div>
<div style="left:806px;top:470px;width:1px;height:375px;background:#d4d4d4"></div>
<div style="left:33px;top:858px;width:1475px;height:24px;background:#222932"></div>
<div class="t" style="left:849px;top:861px;color:#fff;font-size:18px">Blocking Report</div>
<div style="left:33px;top:883px;width:1475px;height:18px;background:#2e3640"></div>
<div style="left:33px;top:882px;width:1475px;height:1px;background:#d6d6d6"></div>
<div class="t" style="left:36px;top:886px;color:#fff;font-size:14.67px">Blocked pid</div>
<div style="left:138px;top:883px;width:1px;height:18px;background:#d6d6d6"></div>
<div class="t" style="left:141px;top:886px;color:#fff;font-size:14.67px">Blocked user</div>
<div style="left:245px;top:883px;width:1px;height:18px;background:#d6d6d6"></div>
<div class="t" style="left:248px;top:886px;color:#fff;font-size:14.67px">Blocked query</div>
<div style="left:705px;top:883px;width:1px;height:18px;background:#d6d6d6"></div>
<div class="t" style="left:708px;top:886px;color:#fff;font-size:14.67px">Blocked query age</div>
<div style="left:848px;top:883px;width:1px;height:18px;background:#d6d6d6"></div>
<div class="t" style="left:851px;top:886px;color:#fff;font-size:14.67px">Blocked wait</div>
<div style="left:954px;top:883px;width:1px;height:18px;background:#d6d6d6"></div>
<div class="t" style="left:957px;top:886px;color:#fff;font-size:14.67px">Blocked wait event</div>
<div style="left:1091px;top:883px;width:1px;height:18px;background:#d6d6d6"></div>
<div class="t" style="left:1094px;top:886px;color:#fff;font-size:14.67px">Blocking pid</div>
<div style="left:1197px;top:883px;width:1px;height:18px;background:#d6d6d6"></div>
<div class="t" style="left:1200px;top:886px;color:#fff;font-size:14.67px">Blocking user</div>
<div style="left:1304px;top:883px;width:1px;height:18px;background:#d6d6d6"></div>
<div class="t" style="left:1307px;top:886px;color:#fff;font-size:14.67px">Blocking query</div>
<div style="left:0px;top:929px;width:1508px;height:32px;background:#e6e6e6"></div>
<div style="left:0px;top:930px;width:1508px;height:1px;background:#a8a8a8"></div>
<div style="left:0px;top:958px;width:1508px;height:1px;background:#c8c8c8"></div>
<div style="left:0px;top:959px;width:1508px;height:2px;background:#f0f0f0"></div>
<svg style="position:absolute;left:25px;top:938px" width="40" height="12"><path d="M6 2 L2 5.5 L6 9 Z" fill="#c3c3c3"/><path d="M31 2 L35 5.5 L31 9 Z" fill="#c3c3c3"/></svg>
<div style="left:100px;top:930px;width:149px;height:25px;background:#fff;border-left:1px solid #a8a8a8;border-right:1px solid #a8a8a8"></div>
<div style="left:101px;top:953px;width:147px;height:2px;background:#217346"></div>
<div class="t" style="left:112px;top:935px;color:#217346;font-size:14.3px;font-weight:bold">Srvr_Performance</div>
<div class="t" style="left:261px;top:935px;color:#444;font-size:14.3px">Exp_Qry</div>
<div class="t" style="left:341px;top:935px;color:#444;font-size:14.3px">Config</div>
<div class="t" style="left:412px;top:935px;color:#444;font-size:14.3px">Storage_Info</div>
<div style="left:328px;top:934px;width:1px;height:20px;background:#bdbdbd"></div>
<div style="left:398px;top:934px;width:1px;height:20px;background:#bdbdbd"></div>
<div style="left:510px;top:934px;width:1px;height:20px;background:#bdbdbd"></div>
<svg style="position:absolute;left:543px;top:935px" width="18" height="18"><circle cx="8.5" cy="8.5" r="7.3" fill="none" stroke="#777" stroke-width="1.3"/><path d="M8.5 4.5 V12.5 M4.5 8.5 H12.5" stroke="#777" stroke-width="1.4"/></svg>
<div style="left:1151px;top:939px;width:2px;height:2px;background:#b0b0b0"></div>
<div style="left:1151px;top:943px;width:2px;height:2px;background:#b0b0b0"></div>
<div style="left:1151px;top:948px;width:2px;height:2px;background:#b0b0b0"></div>
<div style="left:1168px;top:936px;width:345px;height:17px;background:#fff;border:1px solid #a0a0a0"></div>
<div style="left:1184px;top:936px;width:1.5px;height:17px;background:#a0a0a0"></div>
<svg style="position:absolute;left:1172px;top:940px" width="10" height="10"><path d="M6 1 L1.5 5 L6 9 Z" fill="#222"/></svg>
<div style="left:879px;top:215.5px;width:25px;height:9.5px;background:#4285f4"></div>
<div class="t" style="left:910px;top:215px;color:#222;font-size:12.75px">tup fetched</div>
<div style="left:986px;top:215.5px;width:25px;height:9.5px;background:#fbb040"></div>
<div class="t" style="left:1017px;top:215px;color:#222;font-size:12.75px">tup returned</div>
<div style="left:1098.5px;top:215.5px;width:25px;height:9.5px;background:#dd4411"></div>
<div class="t" style="left:1129px;top:215px;color:#222;font-size:12.75px">tup inserted</div>
<div style="left:1210px;top:215.5px;width:25px;height:9.5px;background:#0b6192"></div>
<div class="t" style="left:1240px;top:215px;color:#222;font-size:12.75px">tup updated</div>
<div style="left:1321px;top:215.5px;width:25px;height:9.5px;background:#c0c0c0"></div>
<div class="t" style="left:1351px;top:215px;color:#222;font-size:12.75px">tup deleted</div>
<div class="t" style="left:770px;top:293px;width:142px;text-align:center;transform:rotate(-90deg);color:#bcbcbc;font-size:13.2px">DB - Tuple Activity count</div>
<div style="left:965px;top:250.5px;width:1px;height:112px;background:#dcdcdc"></div>
<div class="t" style="left:915.3px;top:372px;width:100px;text-align:center;color:#555;font-size:14px">0</div>
<div style="left:1050px;top:250.5px;width:1px;height:112px;background:#dcdcdc"></div>
<div class="t" style="left:999.5px;top:372px;width:100px;text-align:center;color:#555;font-size:14px">10000000</div>
<div style="left:1134px;top:250.5px;width:1px;height:112px;background:#dcdcdc"></div>
<div class="t" style="left:1083.7px;top:372px;width:100px;text-align:center;color:#555;font-size:14px">20000000</div>
<div style="left:1218px;top:250.5px;width:1px;height:112px;background:#dcdcdc"></div>
<div class="t" style="left:1167.9px;top:372px;width:100px;text-align:center;color:#555;font-size:14px">30000000</div>
<div style="left:1302px;top:250.5px;width:1px;height:112px;background:#dcdcdc"></div>
<div class="t" style="left:1252.1px;top:372px;width:100px;text-align:center;color:#555;font-size:14px">40000000</div>
<div style="left:1386px;top:250.5px;width:1px;height:112px;background:#dcdcdc"></div>
<div class="t" style="left:1336.3px;top:372px;width:100px;text-align:center;color:#555;font-size:14px">50000000</div>
<div class="t" style="left:854px;top:265.5px;width:100px;text-align:right;color:#5f5f5f;font-size:14.5px">postgres</div>
<div style="left:965.3px;top:264px;width:8.09925694px;height:17px;background:#4285f4"></div>
<div style="left:973.39925694px;top:264px;width:352.58041036px;height:17px;background:#fbb040"></div>
<div style="left:1325.9796673px;top:264px;width:16.84827686px;height:17px;background:#dd4411"></div>
<div class="t" style="left:854px;top:287.5px;width:100px;text-align:right;color:#5f5f5f;font-size:14.5px">template1</div>
<div style="left:965.3px;top:286px;width:7.5062700200000005px;height:17px;background:#4285f4"></div>
<div style="left:972.8062700199999px;top:286px;width:342.92945688000003px;height:17px;background:#fbb040"></div>
<div class="t" style="left:854px;top:310.5px;width:100px;text-align:right;color:#5f5f5f;font-size:14.5px">test</div>
<div style="left:965.3px;top:309px;width:2.50849482px;height:17px;background:#4285f4"></div>
<div style="left:967.80849482px;top:309px;width:76.26737486px;height:17px;background:#fbb040"></div>
<div style="left:1044.0758696799999px;top:309px;width:50.59981318px;height:17px;background:#dd4411"></div>
<div style="left:1094.6917566399998px;top:309px;width:16.9149801px;height:17px;background:#c0c0c0"></div>
<div class="t" style="left:854px;top:333.0px;width:100px;text-align:right;color:#5f5f5f;font-size:14.5px">template0</div>
<div class="t" style="left:945.6px;top:264.5px;color:#111;font-size:14px">961907</div>
<div class="t" style="left:1117.6px;top:264.5px;color:#111;font-size:14px">41874158</div>
<div class="t" style="left:1277.4px;top:264.5px;color:#111;font-size:14px">715</div>
<div class="t" style="left:1306.8px;top:264.5px;color:#111;font-size:14px">2000983</div>
<div class="t" style="left:1371.4px;top:264.5px;color:#111;font-size:14px">195</div>
<div class="t" style="left:945.4px;top:286.5px;color:#111;font-size:14px">891481</div>
<div class="t" style="left:1112px;top:286.5px;color:#111;font-size:14px">40727964</div>
<div class="t" style="left:1267px;top:286.5px;color:#111;font-size:14px">754</div>
<div class="t" style="left:1297.8px;top:286.5px;color:#111;font-size:14px">19127</div>
<div class="t" style="left:1344.6px;top:286.5px;color:#111;font-size:14px">34</div>
<div class="t" style="left:942px;top:309.5px;color:#111;font-size:14px">297921</div>
<div class="t" style="left:1007.7px;top:309.5px;color:#111;font-size:14px">9057883</div>
<div class="t" style="left:1072.4px;top:309.5px;color:#111;font-size:14px">6009479</div>
<div class="t" style="left:1139.3px;top:309.5px;color:#111;font-size:14px">1909</div>
<div class="t" style="left:1178.5px;top:309.5px;color:#111;font-size:14px">2008905</div>
<div class="t" style="left:960.9px;top:332.0px;color:#111;font-size:14px">0</div>
<div class="t" style="left:975.5px;top:332.0px;color:#111;font-size:14px">0</div>
<div class="t" style="left:992.8px;top:332.0px;color:#111;font-size:14px">0</div>
<div class="t" style="left:1008.9px;top:332.0px;color:#111;font-size:14px">0</div>
<div class="t" style="left:1025px;top:332.0px;color:#111;font-size:14px">0</div>
<div style="left:1303.3px;top:272.6px;width:65.20000000000005px;height:1.5px;background:rgba(0,0,0,0.62)"></div>
<div style="left:1302.6px;top:265.1px;width:1.5px;height:16.5px;background:#3a3a3a"></div>
<div style="left:1367.5px;top:265.1px;width:1.5px;height:16.5px;background:#707070"></div>
<svg style="position:absolute;left:1334.6px;top:270.1px" width="9.5" height="6.5"><path d="M9.0 3.0 L0 0 L0 6 Z" fill="#000"/></svg>
<svg style="position:absolute;left:1345.2px;top:270.1px" width="8.399999999999864" height="6.5"><path d="M0 3.0 L7.899999999999864 0 L7.899999999999864 6 Z" fill="#000"/></svg>
<div style="left:1292.4px;top:294.9px;width:48.799999999999955px;height:1.5px;background:rgba(0,0,0,0.62)"></div>
<div style="left:1291.7px;top:287.4px;width:1.5px;height:16.5px;background:#111"></div>
<div style="left:1340.5px;top:287.4px;width:1.5px;height:16.5px;background:#707070"></div>
<svg style="position:absolute;left:1307.5px;top:292.4px" width="8.0" height="6.5"><path d="M7.5 3.0 L0 0 L0 6 Z" fill="#000"/></svg>
<svg style="position:absolute;left:1318.6px;top:292.4px" width="7.900000000000091" height="6.5"><path d="M0 3.0 L7.400000000000091 0 L7.400000000000091 6 Z" fill="#000"/></svg>
<div style="left:1095px;top:317.2px;width:81.40000000000009px;height:1.5px;background:rgba(0,0,0,0.62)"></div>
<div style="left:1134.6px;top:309.7px;width:1.5px;height:16.5px;background:#444"></div>
<div style="left:1175.7px;top:309.7px;width:1.5px;height:16.5px;background:#333"></div>
<svg style="position:absolute;left:1095.5px;top:314.7px" width="7.5" height="6.5"><path d="M7.0 3.0 L0 0 L0 6 Z" fill="#000"/></svg>
<svg style="position:absolute;left:1103px;top:314.7px" width="9.0" height="6.5"><path d="M0 3.0 L8.5 0 L8.5 6 Z" fill="#000"/></svg>
<div style="left:966px;top:339px;width:56px;height:2px;background:#2a2a2a"></div>
<div style="left:966px;top:339.5px;width:56px;height:1.5px;background:rgba(0,0,0,0.62)"></div>
<div style="left:972.4px;top:332px;width:1.5px;height:16.5px;background:#222"></div>
<div style="left:988.5px;top:332px;width:1.5px;height:16.5px;background:#444"></div>
<div style="left:1005.1999999999999px;top:332px;width:1.5px;height:16.5px;background:#444"></div>
<div style="left:1021.3px;top:332px;width:1.5px;height:16.5px;background:#444"></div>
<svg style="position:absolute;left:963.5px;top:336.0px" width="10.0" height="8.5"><path d="M0 4.0 L9.5 0 L9.5 8 Z" fill="#000"/></svg>
<div class="t" style="left:1057.6px;top:434px;color:#b3b3b3;font-size:13.6px">CPU Usage by Process</div>
<div style="left:842px;top:471px;width:24.6px;height:9px;background:#4285f4"></div>
<div class="t" style="left:873px;top:470px;color:#222;font-size:12.75px">cpu usage</div>
<div style="left:946px;top:471px;width:24.6px;height:9px;background:#fbb040"></div>
<div class="t" style="left:976.7px;top:470px;color:#222;font-size:12.75px">memory MB</div>
<div style="left:1005px;top:513px;width:1px;height:284px;background:#dcdcdc"></div>
<div class="t" style="left:964.6px;top:807px;width:80px;text-align:center;color:#555;font-size:14px">0</div>
<div style="left:1084px;top:513px;width:1px;height:284px;background:#dcdcdc"></div>
<div class="t" style="left:1044.4px;top:807px;width:80px;text-align:center;color:#555;font-size:14px">1000</div>
<div style="left:1164px;top:513px;width:1px;height:284px;background:#dcdcdc"></div>
<div class="t" style="left:1124.2px;top:807px;width:80px;text-align:center;color:#555;font-size:14px">2000</div>
<div style="left:1244px;top:513px;width:1px;height:284px;background:#dcdcdc"></div>
<div class="t" style="left:1204.0px;top:807px;width:80px;text-align:center;color:#555;font-size:14px">3000</div>
<div style="left:1324px;top:513px;width:1px;height:284px;background:#dcdcdc"></div>
<div class="t" style="left:1283.8px;top:807px;width:80px;text-align:center;color:#555;font-size:14px">4000</div>
<div style="left:1404px;top:513px;width:1px;height:284px;background:#dcdcdc"></div>
<div class="t" style="left:1363.6px;top:807px;width:80px;text-align:center;color:#555;font-size:14px">5000</div>
<div class="t" style="left:795px;top:523.6px;width:200px;text-align:right;color:#5f5f5f;font-size:14.9px">_Total</div>
<div style="left:1004.6px;top:523.0px;width:64.3986px;height:7.6px;background:#4285f4"></div>
<div style="left:1004.6px;top:530.6px;width:377.055px;height:7.6px;background:#fbb040"></div>
<div class="t" style="left:1076.9986000000001px;top:519.5px;color:#111;font-size:14px">807</div>
<div class="t" style="left:795px;top:541.24px;width:200px;text-align:right;color:#5f5f5f;font-size:14.9px">Idle</div>
<div style="left:1004.6px;top:540.64px;width:55.5408px;height:7.6px;background:#4285f4"></div>
<div class="t" style="left:1068.1408000000001px;top:537.14px;color:#111;font-size:14px">696</div>
<div class="t" style="left:795px;top:558.88px;width:200px;text-align:right;color:#5f5f5f;font-size:14.9px">System</div>
<div style="left:1004.6px;top:558.28px;width:1.2px;height:7.6px;background:#4285f4"></div>
<div class="t" style="left:1015.5px;top:554.78px;color:#111;font-size:14px">8</div>
<div class="t" style="left:795px;top:576.52px;width:200px;text-align:right;color:#5f5f5f;font-size:14.9px">audiodg</div>
<div style="left:1004.6px;top:575.92px;width:1.2px;height:7.6px;background:#4285f4"></div>
<div style="left:1004.6px;top:583.52px;width:1.2px;height:7.6px;background:#fbb040"></div>
<div class="t" style="left:1015.5px;top:572.42px;color:#111;font-size:14px">8</div>
<div class="t" style="left:795px;top:594.1600000000001px;width:200px;text-align:right;color:#5f5f5f;font-size:14.9px">svchost#45</div>
<div style="left:1004.6px;top:593.5600000000001px;width:1.2px;height:7.6px;background:#4285f4"></div>
<div style="left:1004.6px;top:601.1600000000001px;width:1.2px;height:7.6px;background:#fbb040"></div>
<div class="t" style="left:1015.5px;top:590.0600000000001px;color:#111;font-size:14px">4</div>
<div class="t" style="left:795px;top:611.8000000000001px;width:200px;text-align:right;color:#5f5f5f;font-size:14.9px">SmartByteTelemetry</div>
<div style="left:1004.6px;top:611.2px;width:1.2px;height:7.6px;background:#4285f4"></div>
<div style="left:1004.6px;top:618.8000000000001px;width:1.2px;height:7.6px;background:#fbb040"></div>
<div class="t" style="left:1015.5px;top:607.7px;color:#111;font-size:14px">4</div>
<div class="t" style="left:795px;top:629.44px;width:200px;text-align:right;color:#5f5f5f;font-size:14.9px">MSBuild</div>
<div style="left:1004.6px;top:628.84px;width:1.2px;height:7.6px;background:#4285f4"></div>
<div style="left:1004.6px;top:636.44px;width:2.3142px;height:7.6px;background:#fbb040"></div>
<div class="t" style="left:1015.5px;top:625.34px;color:#111;font-size:14px">4</div>
<div class="t" style="left:795px;top:647.08px;width:200px;text-align:right;color:#5f5f5f;font-size:14.9px">WavesSvc64</div>
<div style="left:1004.6px;top:646.48px;width:1.2px;height:7.6px;background:#4285f4"></div>
<div style="left:1004.6px;top:654.08px;width:1.2px;height:7.6px;background:#fbb040"></div>
<div class="t" style="left:1015.5px;top:642.98px;color:#111;font-size:14px">4</div>
<div class="t" style="left:795px;top:664.72px;width:200px;text-align:right;color:#5f5f5f;font-size:14.9px">sqlservr</div>
<div style="left:1004.6px;top:664.12px;width:1.2px;height:7.6px;background:#4285f4"></div>
<div style="left:1004.6px;top:671.72px;width:24.4188px;height:7.6px;background:#fbb040"></div>
<div class="t" style="left:1015.5px;top:660.62px;color:#111;font-size:14px">4</div>
<div class="t" style="left:795px;top:682.36px;width:200px;text-align:right;color:#5f5f5f;font-size:14.9px">DB_Health_Pro</div>
<div style="left:1004.6px;top:681.76px;width:1.2px;height:7.6px;background:#4285f4"></div>
<div style="left:1004.6px;top:689.36px;width:5.187px;height:7.6px;background:#fbb040"></div>
<div class="t" style="left:1015.5px;top:678.26px;color:#111;font-size:14px">4</div>
<div class="t" style="left:795px;top:700.0px;width:200px;text-align:right;color:#5f5f5f;font-size:14.9px">dwm</div>
<div style="left:1004.6px;top:699.4px;width:1.2px;height:7.6px;background:#4285f4"></div>
<div style="left:1004.6px;top:707.0px;width:6.1446px;height:7.6px;background:#fbb040"></div>
<div class="t" style="left:1015.5px;top:695.9px;color:#111;font-size:14px">4</div>
<div class="t" style="left:795px;top:717.6400000000001px;width:200px;text-align:right;color:#5f5f5f;font-size:14.9px">mysqld#1</div>
<div style="left:1004.6px;top:717.0400000000001px;width:1.2px;height:7.6px;background:#4285f4"></div>
<div style="left:1004.6px;top:724.6400000000001px;width:4.7082px;height:7.6px;background:#fbb040"></div>
<div class="t" style="left:1015.5px;top:713.5400000000001px;color:#111;font-size:14px">4</div>
<div class="t" style="left:795px;top:735.28px;width:200px;text-align:right;color:#5f5f5f;font-size:14.9px">explorer</div>
<div style="left:1004.6px;top:734.68px;width:1.2px;height:7.6px;background:#4285f4"></div>
<div style="left:1004.6px;top:742.28px;width:25.137px;height:7.6px;background:#fbb040"></div>
<div class="t" style="left:1015.5px;top:731.18px;color:#111;font-size:14px">4</div>
<div class="t" style="left:795px;top:752.9200000000001px;width:200px;text-align:right;color:#5f5f5f;font-size:14.9px">taskhostw</div>
<div style="left:1004.6px;top:752.32px;width:1.2px;height:7.6px;background:#4285f4"></div>
<div style="left:1004.6px;top:759.9200000000001px;width:1.2px;height:7.6px;background:#fbb040"></div>
<div class="t" style="left:1015.5px;top:748.82px;color:#111;font-size:14px">4</div>
<div class="t" style="left:795px;top:770.5600000000001px;width:200px;text-align:right;color:#5f5f5f;font-size:14.9px">CrossDeviceService</div>
<div style="left:1004.6px;top:769.96px;width:1.2px;height:7.6px;background:#4285f4"></div>
<div style="left:1004.6px;top:777.5600000000001px;width:1.2px;height:7.6px;background:#fbb040"></div>
<div class="t" style="left:1015.5px;top:766.46px;color:#111;font-size:14px">4</div></div></body></html>
